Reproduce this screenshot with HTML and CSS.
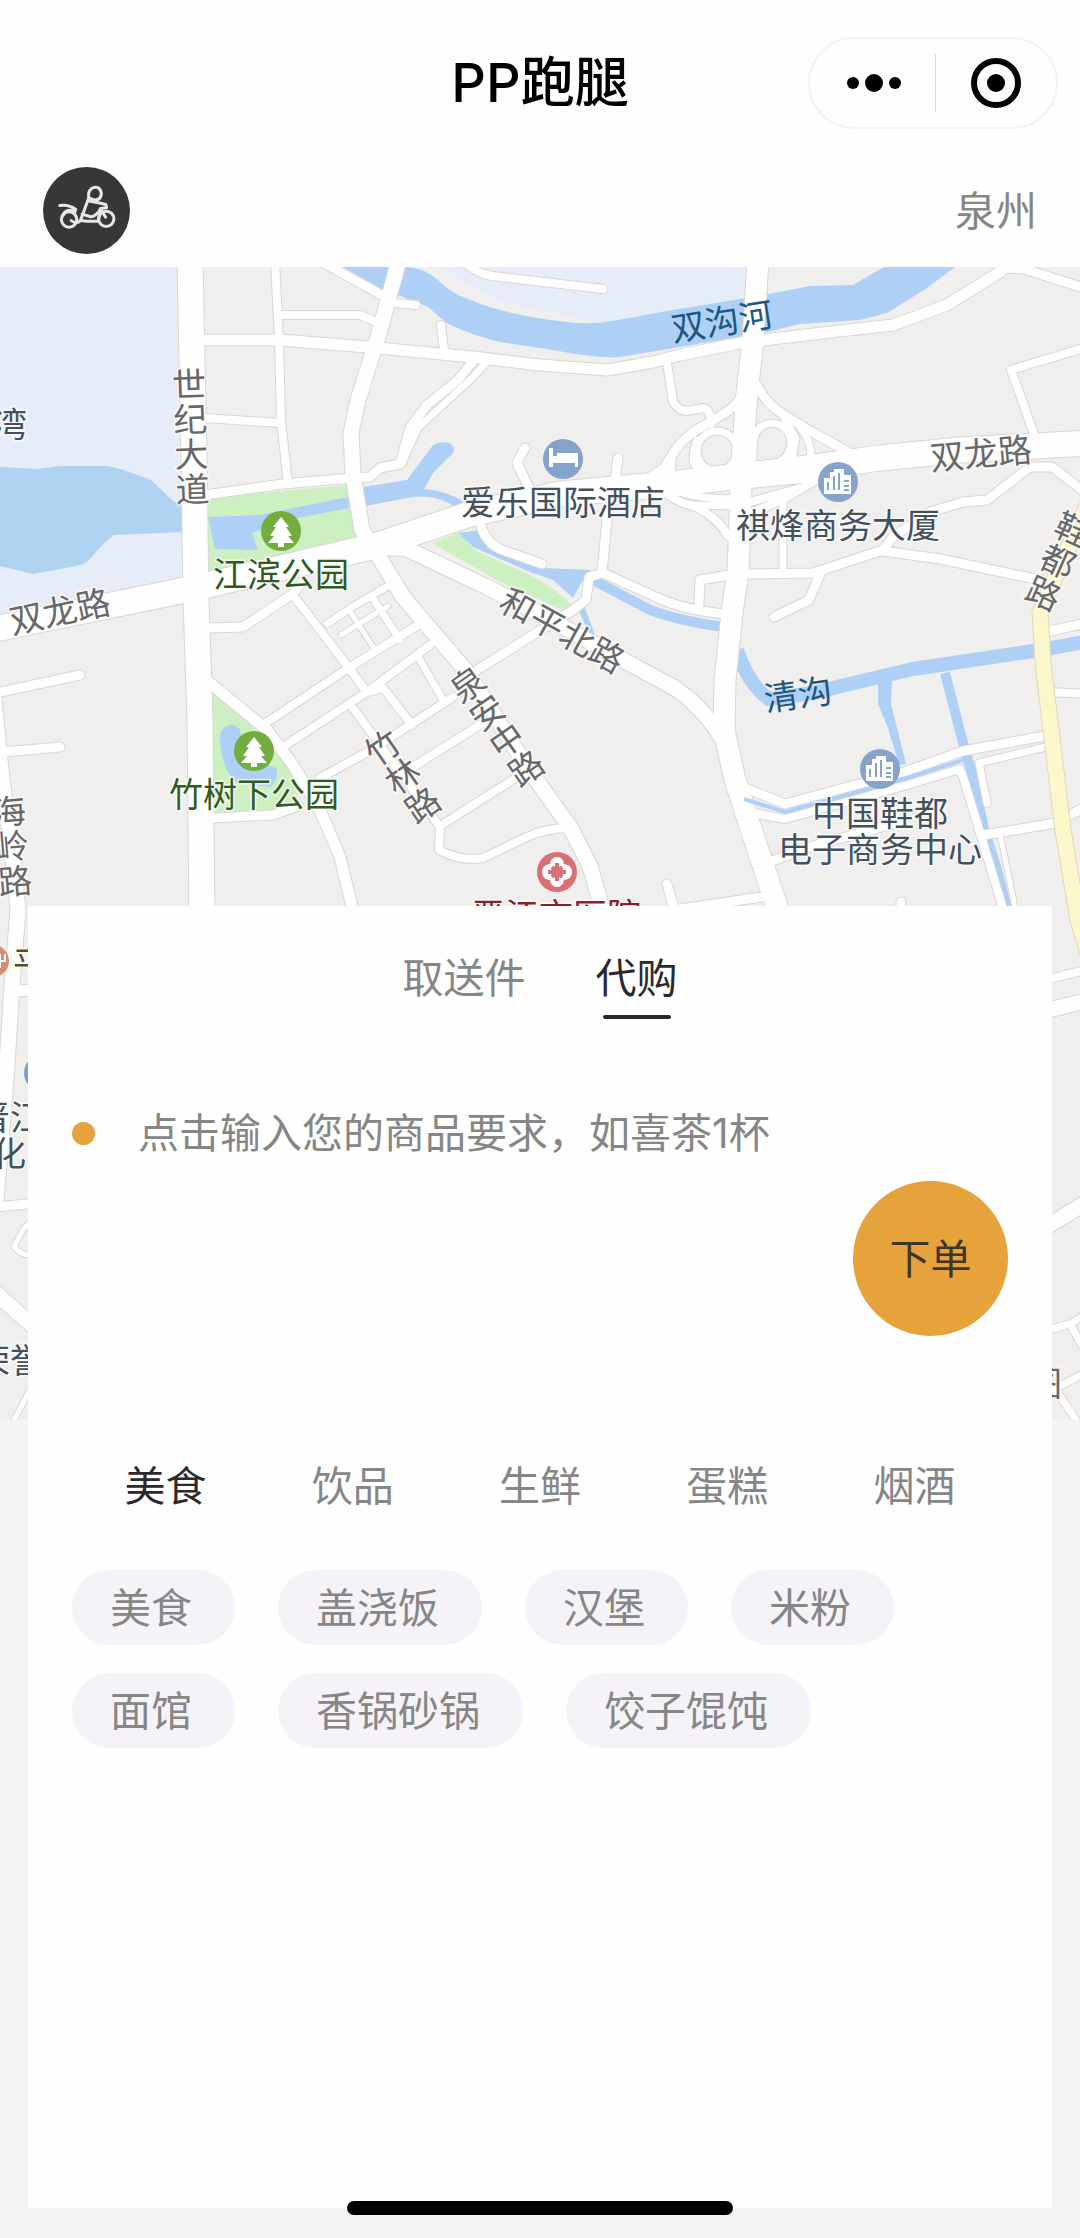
FILE: index.html
```html
<!DOCTYPE html>
<html lang="zh-CN">
<head>
    <meta charset="UTF-8">
    <meta name="viewport" content="width=device-width, initial-scale=1.0">
    <meta content="telephone=no" name="format-detection">
    <title>PP跑腿</title>
    <link rel="stylesheet" href="styles.css">
</head>
<body>
<header class="header">
    <div class="nav">
        <h1 class="nav-title">PP跑腿</h1>
        <div class="capsule">
            <button class="capsule-btn" type="button" aria-label="更多">
                <svg width="60" height="60" viewBox="0 0 60 60">
                    <circle cx="9" cy="30" r="6"/>
                    <circle cx="30" cy="30" r="9"/>
                    <circle cx="51" cy="30" r="6"/>
                </svg>
            </button>
            <button class="capsule-btn" type="button" aria-label="关闭">
                <svg width="60" height="60" viewBox="0 0 60 60">
                    <circle cx="30" cy="30" r="22" fill="none" stroke="#000" stroke-width="6"/>
                    <circle cx="30" cy="30" r="9"/>
                </svg>
            </button>
        </div>
    </div>
    <div class="user-bar">
        <a class="avatar" href="#" aria-label="我的">
            <svg viewBox="0 0 260 260" fill="none" stroke="#e6e6e6" stroke-width="9" stroke-linecap="round" stroke-linejoin="round">
                <circle cx="78" cy="157" r="23"/>
                <circle cx="189" cy="155" r="23"/>
                <path d="M50 115C66 113 84 116 98 127M58 146C66 128 84 126 96 134M137 92L112 160C106 168 92 168 84 160"/>
                <path d="M137 92C132 66 152 56 167 63C180 76 174 96 160 98C150 100 142 94 137 92"/>
                <path d="M134 101L166 107L188 112L190 122L172 124L187 150M172 124C164 142 150 150 140 148L117 141M112 160L132 162L164 162L172 136"/>
            </svg>
        </a>
        <a class="city" href="#">泉州</a>
    </div>
</header>
<main class="stage">
    <svg class="map" viewBox="0 267 1080 1153" preserveAspectRatio="xMidYMin slice" role="img" aria-label="地图">
        <defs>
            <g id="roads">
                <!-- 主干道 -->
                <path class="w24" d="M190 260L194 460L196 600L200 720L202 920"/>
                <path class="w24" d="M-10 630L195 588L375 546L470 514L560 494L680 483L800 469L880 458L960 450L1090 443"/>
                <path class="w20" d="M758 260L753 340L747 393L742 460L738 573L733 605L725 680L724 730L735 780L757 847L780 915"/>
                <path class="w14" d="M399 260L380 330L358 400L351 433L353 475L362 530L375 550L403 597L467 672L527 767L570 827L590 866L604 915"/>
                <path class="w14" d="M375 548L405 548L487 587L540 614L623 660L673 687Q700 704 722 738"/>
                <!-- 北侧 -->
                <path class="w10" d="M203 340L280 340L367 347L473 357L540 365L607 370L653 362L680 355L740 343L830 332L893 325L947 305L1000 272L1012 255"/>
                <path class="w8" d="M1000 268L1024 269L1090 290"/>
                <path class="w7" d="M275 260L279 340L281 420L288 484"/>
                <path class="w7" d="M280 315L360 315L376 322"/>
                <path class="w8" d="M322 262L387 298"/>
                <path class="w7" d="M205 418L280 423"/>
                <path class="w8" d="M205 495L283 484L352 478L370 477L380 468L400 464L410 428L427 405L458 380L474 360"/>
                <path class="w6" d="M402 464L410 445L418 428L446 402L468 382L487 362"/>
                <path class="w7" d="M394 303L416 305"/>
                <path class="w7" d="M441 325L444 350"/>
                <path class="w7" d="M460 258Q476 274 492 276L603 289"/>
                <path class="w7" d="M667 363L673 402Q678 410 686 411L704 408Q711 410 711 424"/>
                <path class="w7" d="M1090 346L1011 370L1022 400L1034 434"/>
                <path class="w8" d="M618 458L615 480"/>
                <path class="w8" d="M525 448L517 463L530 490"/>
                <!-- 立交 -->
                <path class="w8" d="M747 385Q740 404 725 413L705 425Q684 436 674 452L664 468L646 480"/>
                <path class="w8" d="M757 385Q765 403 784 415L812 432L850 453"/>
                <circle class="w6" cx="717" cy="451" r="20"/>
                <path class="w6" d="M752 465L754 440C756 424 770 421 780 425C798 434 792 460 775 463L750 466"/>
                <path class="w6" d="M697 440C690 458 692 470 706 474M672 456L671 480"/>
                <path class="w6" d="M784 418L796 438L791 466M800 428Q812 440 811 462"/>
                <path class="w7" d="M660 488Q674 502 696 507Q718 518 728 536"/>
                <path class="w6" d="M676 491Q705 501 742 498M690 505L742 506"/>
                <path class="w7" d="M748 514L782 500Q806 486 826 474M750 502L800 488M750 484L812 478"/>
                <!-- 东侧 -->
                <path class="w6" d="M783 500L783 573"/>
                <path class="w8" d="M699 604L700 580L735 574L813 573L883 550L893 537L930 512L963 502L987 500L1030 467L1052 467L1090 496"/>
                <path class="w8" d="M883 551L940 559L1040 580"/>
                <path class="w8" d="M820 574L809 600L774 617"/>
                <path class="w8" d="M608 508L602 573"/>
                <path class="w8" d="M480 522Q484 542 502 550L542 564"/>
                <path class="w8" d="M477 670L573 610L586 600L589 577L603 573L656 597Q680 609 724 614"/>
                <path class="w8" d="M743 787L785 804L907 771L963 751L1050 735"/>
                <path class="w7" d="M753 813L785 819L907 785L960 769L964 780L1004 912"/>
                <path class="w6" d="M987 803L979 763L1050 746"/>
                <path class="w8" d="M984 835L1056 823L1090 804"/>
                <path class="w4" d="M1000 834L1016 912"/>
                <path class="w8" d="M1046 632L1090 622"/>
                <path class="w7" d="M1048 692L1090 694"/>
                <path class="w8" d="M764 864L813 846L900 822"/>
                <path class="w8" d="M640 915L768 896M667 884L676 915M901 902L901 915"/>
                <!-- 旧城格网 -->
                <path class="w8" d="M207 628L243 627L293 594L302 582"/>
                <path class="w7" d="M293 595L333 647L367 692L383 688L412 725"/>
                <path class="w7" d="M353 708L440 827"/>
                <path class="w6" d="M327 624L352 607L388 586"/>
                <path class="w7" d="M263 725L350 667L420 624"/>
                <path class="w7" d="M283 747L367 692L430 645"/>
                <path class="w7" d="M320 778L373 749L453 697"/>
                <path class="w7" d="M413 767L483 723"/>
                <path class="w7" d="M517 777L440 826L439 850Q462 862 483 858L527 837Q545 828 572 828"/>
                <path class="w6" d="M372 597L400 640M417 655L443 700"/>
                <path class="w4" d="M349 610L374 648M341 635L388 606"/>
                <path class="w10" d="M206 680L267 730L293 765L320 810L340 857L354 915"/>
                <path class="w8" d="M213 818L273 815L298 806"/>
                <!-- 西侧 -->
                <path class="w8" d="M0 692L80 675M3 752L60 747"/>
                <path class="w14" d="M-7 690L2 780L12 850L18 910L12 985L6 1080L-4 1200"/>
                <path class="w10" d="M12 991L60 989"/>
                <path class="w8" d="M-5 1207L60 1201"/>
                <path class="w4" d="M40 1214L24 1228L14 1246Q20 1257 40 1255"/>
                <path class="w14" d="M-10 1288L60 1350"/>
                <path class="w4" d="M14 1420L32 1386"/>
                <!-- 东缘 -->
                <path class="w7" d="M1040 981L1090 969"/>
                <path class="w14" d="M1040 1012L1090 1000"/>
                <path class="w14" d="M1040 1231L1090 1200"/>
                <path class="w6" d="M1040 1332L1070 1324L1090 1312M1070 1324L1090 1360M1040 1397L1090 1370M1056 1390L1076 1420"/>
            </g>
            <g id="tree">
                <circle r="20" fill="#74ad3f"/>
                <path fill="#fff" d="M0 -14L8 -4H5L11 5H7L13 12H3V16H-3V12H-13L-7 5H-11L-5 -4H-8Z"/>
            </g>
            <g id="building">
                <circle r="20" fill="#87a3cc"/>
                <path fill="#fff" d="M-14 12V-4H-8V-10H-4V-13H6V-7H13V12Z"/>
                <path stroke="#87a3cc" stroke-width="2" fill="none" d="M-10 0V8M-4 -6V8M1 -9V8M6 -1H11M6 4H11M6 8H11"/>
            </g>
        </defs>

        <rect class="land" x="-600" y="267" width="2280" height="1153"/>
        <path class="bay" d="M-600 267H180L184 580L0 620H-600ZM440 267H752V300L605 324L500 302Z"/>
        <path class="water" d="M-600 467H0L38 469L60 466H108Q126 470 151 480L172 500L184 507V532L114 535Q104 542 96 552Q88 564 76 566L33 574L0 566H-600Z"/>
        <path class="river" d="M343 267H407Q424 268 438 280Q452 294 468 299Q505 315 567 322Q590 325 612 321L673 310L747 298L810 286L853 285L884 267H955L927 288L887 313L860 320L800 324L767 332L680 347L620 357Q600 359 553 350L500 342Q465 333 447 323Q438 316 428 307L403 297L383 290Z"/>
        <path class="park" d="M208 498L347 485L355 537L350 545L213 575L207 573ZM432 543L458 533L475 550L530 575L555 590L572 605L565 611L500 582ZM210 687L237 710L297 777V810L215 813Z"/>
        <path class="river" d="M208 517L260 515L348 497L349 508L293 519L252 533L258 550L215 549ZM363 487L407 480L433 445Q440 441 450 443Q456 448 453 453L433 473L424 489Q446 490 466 503L457 508Q438 494 413 497L365 506Z"/>
        <path class="river" d="M458 533L480 530L497 553L542 568L590 570L580 585L573 598L553 580L530 572L473 547ZM578 609L584 605L595 635H590ZM230 725Q218 728 220 742Q224 778 240 783L270 787Q280 780 276 768L244 758L240 730Q236 724 230 725Z"/>
        <path class="river" d="M878 680H892L891 704L906 764L899 765L888 728L878 704Z"/>
        <path class="stream w10" d="M593 580L650 610Q680 621 724 627"/>
        <path class="stream w14" d="M737 650Q748 684 769 699L813 693L837 687L913 669L1040 650L1090 641"/>
        <path class="stream w10" d="M945 673L963 743L971 770L984 828L997 870L1008 912"/>

        <use href="#roads" class="casing"/>
        <use href="#roads" class="surface"/>
        <path class="yellow-edge" d="M1090 500L1058 570L1040 613L1043 663L1053 747L1063 830L1078 920L1096 980"/>
        <path class="yellow" d="M1090 500L1058 570L1040 613L1043 663L1053 747L1063 830L1078 920L1096 980"/>
        <path class="stream w4" d="M744 799L785 812L840 797L907 778L963 760"/>

        <use href="#tree" x="281" y="531"/>
        <use href="#tree" x="254" y="751"/>
        <use href="#building" x="838" y="482"/>
        <use href="#building" x="880" y="769"/>
        <circle cx="563" cy="459" r="20" fill="#84a3c9"/>
        <path fill="#fff" d="M549 448H553V456H557V453H578V467H575V463H553V467H549Z"/>
        <circle cx="557" cy="872" r="20" fill="#d97078"/>
        <path fill="#fff" d="M557 857Q563 857 564 864Q572 865 572 872Q572 879 564 880Q563 887 557 887Q551 887 550 880Q542 879 542 872Q542 865 550 864Q551 857 557 857Z"/>
        <path stroke="#d97078" stroke-width="4" fill="none" d="M557 863V881M548 872H566M552 867L562 877M562 867L552 877"/>
        <circle cx="-7" cy="961" r="16" fill="#d98c6c"/>
        <path stroke="#fff" stroke-width="2" fill="none" d="M0 954V968M0 961H5V954"/>
        <circle cx="42" cy="1073" r="18" fill="#7d9fc4"/>

        <g class="label green">
            <text x="281" y="587">江滨公园</text>
            <text x="254" y="807">竹树下公园</text>
        </g>
        <g class="label poi">
            <text x="563" y="515">爱乐国际酒店</text>
            <text x="838" y="538">祺烽商务大厦</text>
            <text x="880" y="826">中国鞋都</text>
            <text x="880" y="862">电子商务中心</text>
            <text x="10" y="437">湾</text>
            <text x="10" y="1130">晋江</text>
            <text x="9" y="1166">化</text>
            <text x="10" y="1373">荣誉</text>
        </g>
        <text class="label medical" x="556" y="928">晋江市医院</text>
        <text class="label olive" x="30" y="976">平</text>
        <g class="label river-name">
            <text transform="translate(722 322) rotate(-9)" y="12">双沟河</text>
            <text transform="translate(798 695) rotate(-8)" y="12">清沟</text>
        </g>
        <g class="label road-name">
            <text transform="translate(981 454) rotate(-5)" y="12">双龙路</text>
            <text transform="translate(60 612) rotate(-12)" y="12">双龙路</text>
            <text transform="translate(562 631) rotate(29)" y="12">和平北路</text>
            <text transform="translate(189 385) rotate(-2)" x="0 0 0 0" y="12 47 82 117">世纪大道</text>
            <text transform="translate(468 685) rotate(-35)" x="0 0 0 0" y="12 46 80 114">泉安中路</text>
            <text transform="translate(383 748) rotate(-35)" x="0 0 0" y="12 47 82">竹林路</text>
            <text transform="translate(1072 530) rotate(24)" x="0 0 0" y="12 47 82">鞋都路</text>
            <text transform="translate(9 812) rotate(-5)" x="0 0 0" y="12 47 82">海岭路</text>
            <text x="1045" y="1396">图</text>
        </g>
    </svg>

    <section class="card">
        <nav class="tabs">
            <a class="tab" href="#">取送件</a>
            <a class="tab active" href="#">代购</a>
        </nav>
        <form class="order">
            <label class="demand">
                <span class="dot"></span>
                <input class="demand-input" type="text" aria-label="商品要求" placeholder="点击输入您的商品要求，如喜茶1杯">
            </label>
            <button class="submit" type="button">下单</button>
        </form>
        <nav class="category">
            <a class="category-item active" href="#">美食</a>
            <a class="category-item" href="#">饮品</a>
            <a class="category-item" href="#">生鲜</a>
            <a class="category-item" href="#">蛋糕</a>
            <a class="category-item" href="#">烟酒</a>
        </nav>
        <div class="tags">
            <button class="tag" type="button">美食</button>
            <button class="tag" type="button">盖浇饭</button>
            <button class="tag" type="button">汉堡</button>
            <button class="tag" type="button">米粉</button>
            <button class="tag" type="button">面馆</button>
            <button class="tag" type="button">香锅砂锅</button>
            <button class="tag" type="button">饺子馄饨</button>
        </div>
    </section>
</main>
<div class="home-bar"></div>
</body>
</html>
```
FILE: styles.css
```css
*{
    margin: 0;
    padding: 0;
    box-sizing: border-box;
}
body{
    min-height: 100vh;
    display: flex;
    flex-direction: column;
    background-color: #f4f3f6;
    color: #868686;
    font-family: "Inter", "Noto Sans CJK SC", sans-serif;
    font-size: 41px;
    line-height: 60px;
}
a{
    color: inherit;
    text-decoration: none;
}
button,input{
    border: none;
    background: none;
    color: inherit;
    font: inherit;
}

/* 顶部 */
.header{
    background-color: #fefefe;
    padding: 37px 22px 13px;
}
.nav{
    display: grid;
    grid-template-columns: 1fr auto 1fr;
    align-items: center;
}
.nav-title{
    grid-column: 2;
    color: #000;
    font-size: 54px;
    font-weight: 500;
}
.capsule{
    justify-self: end;
    display: flex;
    align-items: center;
    width: 250px;
    height: 92px;
    padding-left: 4px;
    border: 2px solid #f3f3f3;
    border-radius: 46px;
}
.capsule-btn{
    flex: 1;
    display: flex;
    align-items: center;
    justify-content: center;
    height: 58px;
}
.capsule-btn + .capsule-btn{
    border-left: 1px solid #d8d8d8;
}
.user-bar{
    display: flex;
    align-items: center;
    justify-content: space-between;
    margin-top: 38px;
    padding: 0 21px;
}
.avatar{
    width: 87px;
    height: 87px;
    border-radius: 50%;
    background-color: #373737;
}
.avatar svg{
    display: block;
}

/* 地图与卡片叠放在同一格 */
.stage{
    flex: 1;
    display: grid;
}
.map{
    grid-area: 1 / 1;
    width: 100%;
    height: 1153px;
}
.land{
    fill: #f0efee;
}
.bay{
    fill: #e6edf8;
}
.water{
    fill: #afd2f1;
}
.river{
    fill: #aed0f7;
}
.park{
    fill: #cdf0c2;
}
.stream{
    fill: none;
    stroke: #aed0f7;
}
.casing,.surface{
    fill: none;
    stroke-linecap: round;
    stroke-linejoin: round;
}
.casing{
    --edge: 3px;
    stroke: #dad6d5;
}
.surface{
    --edge: 1px;
    stroke: #fefefe;
}
.w4{ stroke-width: calc(4px + var(--edge, 0px)); }
.w6{ stroke-width: calc(6px + var(--edge, 0px)); }
.w7{ stroke-width: calc(7px + var(--edge, 0px)); }
.w8{ stroke-width: calc(8px + var(--edge, 0px)); }
.w10{ stroke-width: calc(10px + var(--edge, 0px)); }
.w14{ stroke-width: calc(14px + var(--edge, 0px)); }
.w20{ stroke-width: calc(20px + var(--edge, 0px)); }
.w24{ stroke-width: calc(24px + var(--edge, 0px)); }
.yellow-edge,.yellow{
    fill: none;
    stroke: #dcd8bd;
    stroke-width: 17px;
}
.yellow{
    stroke: #fcf7cb;
    stroke-width: 15px;
}
.label{
    font-size: 34px;
    text-anchor: middle;
    stroke: #fff;
    stroke-width: 3px;
    stroke-opacity: .7;
    paint-order: stroke;
}
.green{
    fill: #315a1e;
}
.poi{
    fill: #43505f;
}
.medical{
    fill: #8d1f27;
}
.olive{
    fill: #54502d;
}
.river-name{
    fill: #20567f;
    stroke: none;
}
.road-name{
    fill: #68686a;
}

/* 下单卡片 */
.card{
    grid-area: 1 / 1;
    margin: 639px 28px 30px;
    padding: 42px 44px;
    background-color: #fefefe;
}
.tabs{
    display: flex;
    justify-content: center;
    gap: 70px;
}
.tab{
    display: flex;
    flex-direction: column;
    align-items: center;
    height: 72px;
}
.tab.active{
    color: #2b292c;
}
.tab.active::after{
    content: "";
    width: 68px;
    height: 4px;
    margin-top: 7px;
    background-color: #2b292c;
    border-radius: 2px;
}
.order{
    display: flex;
    flex-direction: column;
    margin-top: 83px;
}
.demand{
    display: flex;
    align-items: center;
}
.dot{
    width: 23px;
    height: 23px;
    border-radius: 50%;
    background-color: #e6a33b;
}
.demand-input{
    flex: 1;
    height: 60px;
    margin-left: 43px;
    outline: none;
}
.demand-input::placeholder{
    color: #868686;
    opacity: 1;
}
.submit{
    align-self: flex-end;
    width: 155px;
    height: 155px;
    margin-top: 18px;
    border-radius: 50%;
    background-color: #e6a33b;
    color: #3f3526;
}
.category{
    display: grid;
    grid-template-columns: repeat(5, 1fr);
    margin-top: 120px;
    text-align: center;
}
.category-item.active{
    color: #2b292c;
}
.tags{
    display: flex;
    flex-wrap: wrap;
    gap: 28px 43px;
    margin-top: 54px;
}
.tag{
    height: 75px;
    padding: 0 43px 0 38px;
    border-radius: 38px;
    background-color: #f5f3f7;
}
.home-bar{
    position: fixed;
    bottom: 23px;
    left: 50%;
    width: 386px;
    height: 14px;
    margin-left: -193px;
    border-radius: 7px;
    background-color: #000;
}
```
